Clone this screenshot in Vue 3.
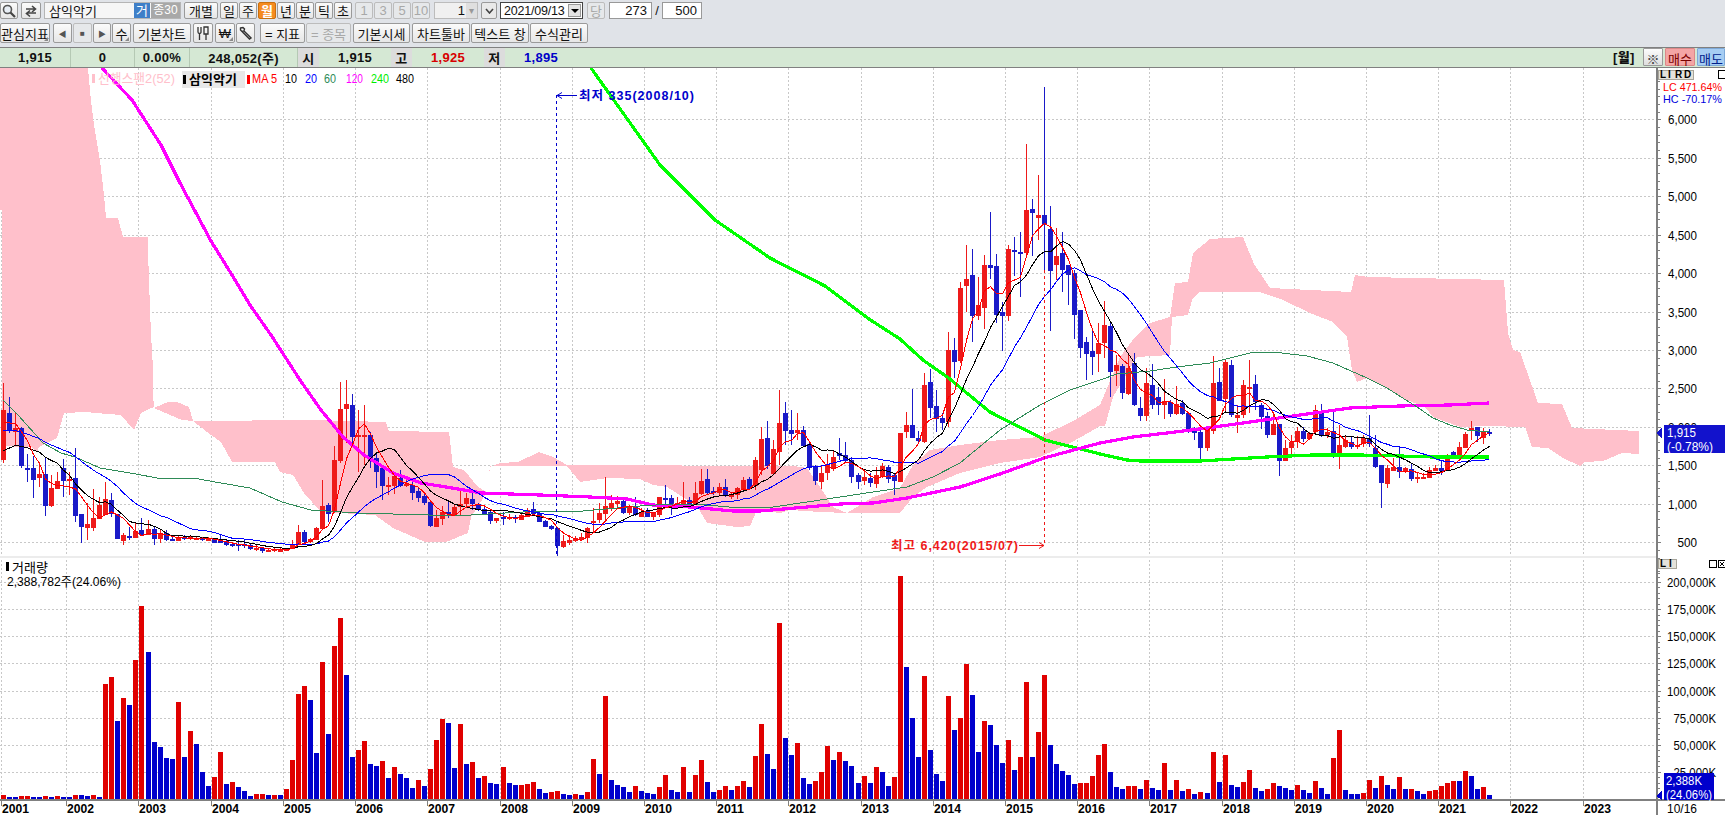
<script setup>
// 월봉 차트: 좌표는 화면 픽셀 기준 (y = 68 ~ 815)
const barX = (i) => Math.floor(3.6 + 6.017 * i)
const priceY = (p) => 119.3 + (6000 - p) * 0.0769
const volBase = 799
const volY = (k) => volBase - k * 0.001085

// "색 고가 몸통위 몸통아래 저가" 묶음. base/scale은 읽어낸 원본 좌표계
function parseRows(text, base, scale) {
  return text
    .trim()
    .split(',')
    .map((row) => {
      const [c, hi, top, bot, lo] = row.trim().split(/\s+/)
      const f = (v) => Math.round(base + Number(v) / scale)
      return { up: c === 'r', hi: f(hi), top: f(top), bot: f(bot), lo: f(lo) }
    })
}

const candles = [
  ...parseRows(
    `r 9 90 240 248,b 50 98 150 160,r 98 143 155 198,b 140 143 258 265,b 222 264 266 305,b 228 264 299 353,
    r 245 282 293 320,b 232 282 378 407,r 285 324 378 382,r 277 304 326 328,b 238 264 303 350,r 275 297 302 345,
    b 204 294 407 425,b 402 402 441 489,r 369 432 444 480,r 327 414 444 453,r 352 375 417 417,r 306 357 405 405,
    b 340 360 402 410,b 402 402 477 477,r 460 465 483 495,b 440 468 474 480,r 425 453 474 475,b 414 450 465 468,
    r 420 447 465 465,b 438 447 477 495,r 450 459 477 488,b 450 459 480 482,b 470 477 483 483,r 465 471 483 483,
    b 465 471 473 480,r 465 471 477 480,r 470 474 478 480,b 472 474 480 482,r 470 474 482 484,b 475 477 488 488,
    b 462 478 488 490,b 478 483 495 497,b 486 491 498 500,b 480 493 495 512,b 480 491 497 505,b 490 495 506 510,
    r 495 503 509 512,b 500 505 514 518,r 505 509 515 515,r 500 507 513 515,r 505 509 513 515,r 503 507 512 512,
    r 480 491 506 507,r 435 456 493 494,b 450 455 486 490,r 475 478 486 488,r 441 444 480 481,r 301 378 447 448,
    b 368 375 402 425,r 198 240 395 400,r 5 87 243 250,r 0 72 87 190,b 42 75 171 190,r 90 165 171 275,
    r 75 165 171 255,b 156 165 234 265,b 220 234 276 325,b 258 264 318 360,r 290 315 319 345,r 280 288 318 342,
    b 270 294 318 322,r 290 312 316 322,b 300 315 339 360,b 325 333 354 366,b 340 348 369 375,b 360 366 438 440,
    r 390 414 440 441,r 378 396 417 435,b 365 396 402 415,r 375 381 405 405,r 325 372 381 405,r 338 354 372 378,
    b 338 357 372 390,b 368 372 390 392,b 380 387 402 404,b 390 396 423 432,r 415 415 423 428,b 397 411 414 435,
    r 403 411 417 420,b 405 412 415 428,r 398 405 420 420,r 385 391 411 412,b 366 387 402 402,b 395 399 426 426,
    b 420 423 441 441,b 435 438 447 450,b 440 444 498 528`,
    380,
    3
  ),
  ...parseRows(
    `r 465 483 500 505,r 465 480 489 495,r 468 474 483 485,r 460 471 480 480,r 440 445 473 488,r 385 423 426 455,
    r 370 399 420 428,r 290 378 402 420,r 345 369 387 392,r 348 363 371 382,b 355 363 399 402,r 375 381 399 405,
    b 352 378 405 408,r 385 396 411 412,b 385 393 411 412,r 395 399 411 420,r 352 352 405 412,b 315 354 356 372,
    b 345 354 378 405,r 352 369 378 385,r 306 360 372 372,b 350 360 375 380,r 305 339 375 375,r 267 303 342 345,
    b 267 297 339 345,b 320 333 339 345,r 310 321 339 345,b 298 321 345 350,r 335 345 351 357,r 320 324 345 357,
    r 292 300 330 330,b 290 297 327 330,r 230 240 318 330,r 141 177 270 285,b 123 174 258 268,r 180 207 282 285,
    r 30 129 216 255,b 66 99 153 195,b 90 150 162 195,r 99 150 160 180,b 138 150 198 200,b 188 192 264 270,
    b 255 258 303 315,r 255 279 306 327,r 222 255 279 300,r 210 231 267 273,b 175 219 228 240,b 185 225 243 245,
    b 230 240 291 310,b 280 285 306 327,r 270 291 303 315,b 280 294 309 320,r 260 286 312 325,r 248 258 291 295,
    b 255 261 297 310,b 278 285 303 345,r 160 160 306 306,r 96 135 156 175,b 27 135 174 175,b 153 174 184 190,
    r -21 15 186 190,b -33 5 84 114,b 30 78 117 155,b 100 114 129 150,r -144 -90 126 140`,
    380,
    3
  ),
  ...parseRows(
    `b 338 350 362 378,r 282 288 361 363,r 245 279 286 312,b 249 275 316 342,r 277 305 316 320,r 255 265 308 329,
    b 212 265 268 279,b 254 266 315 323,b 302 312 316 351,r 245 249 316 321,b 237 250 252 276,b 232 252 254 297,
    r 144 210 253 255,b 199 209 213 256,r 175 215 218 240,b 87 215 225 270,b 206 229 271 331,r 228 256 265 280,
    b 232 253 270 292,b 265 265 275 305,b 270 273 315 339,b 310 310 348 358,b 337 342 354 380,b 330 351 357 375,
    r 323 343 354 372,r 301 325 343 358,b 323 326 372 397`,
    0,
    1
  ),
  ...parseRows(
    `r 165 195 213 258,b 192 198 279 297,r 160 204 282 285,b 160 189 315 318,b 290 324 348 362,r 204 249 348 362,
    b 192 255 315 327,b 261 291 315 345,r 237 303 315 357,b 300 305 342 352,r 258 311 342 345,b 300 309 342 345,
    b 335 339 396 399,b 380 393 396 420,b 380 396 444 477,r 385 390 444 452,r 168 249 393 402,b 204 246 303 303,
    r 180 186 297 340,b 180 195 345 350,r 315 345 354 399,r 240 255 345 354,r 180 261 267 340,b 225 252 306 330,
    b 310 315 351 387,b 335 348 405 415,r 335 372 405 405,b 372 372 483 528,r 420 444 483 483,r 405 427 444 470,
    r 380 393 427 444,b 382 393 417 425,r 395 399 417 420,r 315 330 396 400,b 312 339 405 412,r 384 396 405 415,
    b 336 394 459 473,r 375 435 461 506,r 405 420 441 445,b 408 426 441 447,r 408 435 441 447,r 405 414 432 440,
    b 345 414 432 440,b 405 444 501 504,b 495 495 549 623,r 495 504 552 564,r 475 501 513 513,b 441 501 516 535,
    r 500 504 516 520,b 490 507 537 543,r 520 531 537 549,r 520 531 534 537,r 500 510 534 534,r 495 504 513 513,
    b 480 504 513 525,r 462 471 513 513,b 452 456 471 475,r 425 441 471 475,r 395 402 444 445,r 363 384 390 420,
    b 380 381 408 425,r 385 396 414 431,b 387 396 402 407`,
    300,
    3
  ),
].map((c, i) => ({ ...c, x: barX(i) }))

// 거래량: 양수 = 빨강, 음수 = 파랑 (1/3 픽셀 단위)
const volumes = [
  12, -6, -6, 9, 9, -6, -6, 9, -6, 9, -6, -6, 12, -12, -9, 12, -6, 345, 366, -234, 303, -282, 417, 579, -441, -171,
  -156, -123, -120, 291, -126, 204, -165, -81, -39, 66, 141, -45, 51, -36, -24, -9, 15, 15, -12, 12, -12, 30, 117, 315,
  339, -297, -138, 411, -195, 459, 543, -372, -126, 147, 174, -105, -99, 114, -63, 96, -75, -63, -33, 57, -39, 90, 177,
  240, -228, -93, 225, -105, 111, -63, 69, -48, -45, 96, -48, -42, 42, 45, 51, -30, -18, 21, 24, -15, -12, 15, -12, 21,
  120, -75, 309, -57, -42, -36, -21, 39, -24, -18, -15, 36, 72, -27, -21, 96, -21, 72, 117, -51, -21, 27, 39, -27, 39,
  54, -36, 129, 225, -135, -90, 528, -183, -132, 168, -63, -45, 54, 81, 159, -117, 141, -114, -99, -48, 69, -48, 96,
  -81, -39, 66, 669, -396, -243, -126, 369, -147, -75, -54, 309, -207, 243, 405, -312, -141, 234, -222, -162, -108, 177,
  -87, 126, 351, -126, 201, 372, -162, -105, -84, -72, -45, 48, 48, 69, 132, 165, -81, -36, -30, 39, 39, -30, 57, -33,
  -27, 108, -27, 57, -24, 30, -15, 21, -18, 141, -51, 132, -42, -36, 51, 87, -33, -24, 30, 48, -39, -33, -27, 42, -27,
  -18, 54, -33, -15, 123, 207, -27, -15, -15, 18, 57, -33, 69, -42, -30, 66, -30, 30, -24, -15, 24, 27, 39, 48, 54, -54,
  84, -69, -30, 36, -12,
].map((v, i) => ({ x: barX(i), h: Math.round(Math.abs(v) / 3), up: v > 0 }))

// 이동평균 5/10/20 은 종가(픽셀)로 계산
const closes = candles.map((c) => (c.up ? c.top : c.bot))
function maPoints(n, seed) {
  return closes
    .map((_, i) => {
      let s = 0
      for (let j = i - n + 1; j <= i; j++) s += j < 0 ? seed : closes[j]
      return `${barX(i) + 0.5},${(s / n).toFixed(1)}`
    })
    .join(' ')
}
const ma5 = maPoints(5, 425)
const ma10 = maPoints(10, 455)
const ma20 = maPoints(20, 432)

const ma60 =
  '3,400 18,415 43,443 61,453 75,457 100,468 136,474 157,478 193,478 221,483 250,488 282,502 311,510 357,513 429,515 471,515 540,511 583,511 640,506 673,504 707,505 740,508 773,507 807,502 840,497 873,492 907,487 933,477 960,463 1000,430 1040,405 1070,390 1100,380 1117,374 1150,371 1177,367 1210,363 1250,353 1273,352 1307,356 1333,363 1367,378 1387,388 1417,407 1433,418 1450,425 1467,430 1489,432'
const ma120 =
  '102,68 132,100 161,145 180,183 211,241 232,275 250,305 271,335 300,380 321,410 343,437 364,455 393,473 421,483 446,487 482,493 511,494 540,495 590,497 627,499 653,505 690,507 733,511 760,511 807,507 840,504 873,503 907,498 960,487 1000,474 1044,458 1070,451 1100,443 1133,437 1167,433 1207,428 1250,422 1300,415 1350,408 1400,406 1450,405 1489,403'
const ma240 =
  '591,68 660,165 715,220 770,258 825,286 869,319 900,339 923,360 950,379 957,385 990,412 1045,440 1100,454 1127,460 1140,461 1200,461 1233,459 1267,457 1313,455 1360,455 1400,456 1433,457 1489,457'

// 일목 구름대
const cloud = [
  '0,68 88,68 91,101 94,125 100,161 104,195 106,218 118,218 123,237 147.5,237 149,281 151,335 153,368 153.6,407 141,413 134,430 121,415 96,413 86,412 64,413 57,438 39,447 37,453 32,447 18,447 2,445 2,210 0,210',
  '154,408 168,402 177,402 189,407 193,421 182,420',
  '193,421 314,420 386,422 389,431 449,432 453,467 464,470 478,487 487,492 471,517 468,533 446,542 425,542 393,528 375,515 321,512 304,493 293,475 280,472 275,462 232,462 221,442 211,435',
  '487,492 490,467 500,463 518,462 539,452 553,457 567,465 793,466 807,468 820,487 833,507 847,513 820,512 790,510 780,513 757,510 750,526 737,527 707,523 697,506 667,487 653,485 640,479 607,478 580,482 567,466 490,466',
  '847,513 873,497 900,488 913,465 930,450 960,445 1000,440 1040,437 1075,420 1100,405 1120,357 1135,337 1150,323 1170,317 1175,283 1188,282 1193,253 1210,239 1243,237 1254,264 1270,288 1351,292 1355,275 1368,277 1504,280 1508,333 1513,350 1520,352 1537,400 1538,403 1562,404 1572,428 1639,431 1639,454 1622,453 1603,461 1585,462 1580,466 1563,458 1548,448 1532,447 1525,427 1487,426 1460,427 1433,417 1425,407 1407,400 1390,390 1377,383 1367,378 1357,382 1352,370 1347,337 1333,322 1310,313 1283,300 1260,292 1199,292 1192,300 1188,315 1172,317 1170,355 1137,357 1133,363 1113,397 1105,426 1100,426 1090,432 1070,443 1040,457 1000,463 960,473 927,487 913,497 900,513',
]

// 축
const axisRight = 1657
const years = Array.from({ length: 23 }, (_, k) => ({
  label: 2001 + k,
  x: k === 0 ? 1 : barX(11 + (k - 1) * 12) - 3,
}))
const fmt = (n) => n.toLocaleString('en-US')
const textW = (s) => [...s].reduce((w, ch) => w + (ch === ',' ? 3 : ch === 'K' ? 7 : 6.5), 0)

const priceTicks = Array.from({ length: 12 }, (_, k) => (k + 1) * 500).map((p) => ({
  y: Math.round(priceY(p)),
  text: fmt(p),
}))
const priceMinor = Array.from({ length: 65 }, (_, k) => Math.round(priceY(100 + k * 100)))
const volTicks = Array.from({ length: 8 }, (_, k) => (k + 1) * 25000).map((v) => ({
  y: Math.round(volY(v)),
  text: fmt(v) + 'K',
}))
const volMinor = Array.from({ length: 44 }, (_, k) => Math.round(volY((k + 1) * 5000)))

const maLegend = [
  { t: 'MA 5', x: 252, w: 25, c: '#ff0000' },
  { t: '10', x: 285, w: 12, c: '#000000' },
  { t: '20', x: 305, w: 12, c: '#0000ff' },
  { t: '60', x: 324, w: 12, c: '#2e8b57' },
  { t: '120', x: 346, w: 17, c: '#ff00ff' },
  { t: '240', x: 371, w: 18, c: '#00ee00' },
  { t: '480', x: 396, w: 18, c: '#000000' },
]

const periods = ['일', '주', '월', '년', '분', '틱', '초']
const counts = ['1', '3', '5', '10']
</script>

<template>
  <div class="hts">
    <div class="toolbar row1">
      <button class="btn w18">
        <svg width="14" height="14" viewBox="0 0 14 14">
          <circle cx="5.5" cy="5.5" r="4" fill="#e8eef5" stroke="#555" stroke-width="1.6" />
          <path d="M8.5 8.5 L13 13" stroke="#444" stroke-width="2.2" />
        </svg>
      </button>
      <button class="btn w20 ml3">
        <svg width="14" height="14" viewBox="0 0 14 14" fill="none" stroke="#444" stroke-width="1.6">
          <path d="M2 5 H11 M8 2 L11.500 5 L8 8" />
          <path d="M12 9 H3 M6 6.500 L2.500 9.500 L6 12.500" />
        </svg>
      </button>
      <div class="code ml3">
        <span class="code-name">삼익악기</span>
        <span class="tag-blue">거</span>
        <span class="tag-grey">종30</span>
      </div>
      <button class="btn w34 ml3">개별</button>
      <div class="group ml2">
        <button v-for="p in periods" :key="p" class="btn w18" :class="{ on: p === '월' }">{{ p }}</button>
      </div>
      <div class="group ml3">
        <button v-for="c in counts" :key="c" class="btn w18 off">{{ c }}</button>
      </div>
      <div class="spin ml4">
        <span class="spin-val">1</span>
        <span class="spin-arrow">▾</span>
      </div>
      <button class="btn w16 ml3 chev">
        <svg width="9" height="6" viewBox="0 0 9 6" fill="none" stroke="#444" stroke-width="1.6"><path d="M1 1 L4.500 5 L8 1" /></svg>
      </button>
      <div class="date ml3">
        <span>2021/09/13</span>
        <span class="date-arrow"><i></i></span>
      </div>
      <button class="btn w18 off ml4">당</button>
      <div class="field w43 ml4">273</div>
      <span class="slash">/</span>
      <div class="field w40">500</div>
    </div>

    <div class="toolbar row2">
      <button class="btn w50 corner">관심지표</button>
      <div class="group ml3">
        <button class="btn w19 tri">◀</button>
        <button class="btn w19 tri off">■</button>
        <button class="btn w18 tri">▶</button>
      </div>
      <button class="btn w19 corner ml1">수</button>
      <button class="btn w58 ml2">기본차트</button>
      <button class="btn w20 ml2">
        <svg width="14" height="15" viewBox="0 0 14 15" fill="none" stroke="#333" stroke-width="1.3">
          <path d="M2 1 V6 C2 8 5 8 5 6 V1 M3.500 8 V14" />
          <path d="M8 1 H12 V8 H8 Z M10 8 V14" />
        </svg>
      </button>
      <button class="btn w20 corner ml2">₩</button>
      <button class="btn w19 ml1">
        <svg width="14" height="14" viewBox="0 0 14 14" fill="none" stroke="#333" stroke-width="1.4">
          <path d="M1.500 2 L4 1.500 L5.500 3 L5 5 L3 5.500 L1.500 4 Z M5 5 L12 12 L10.500 13 L3.500 6" />
        </svg>
      </button>
      <button class="btn w45 ml5">= 지표</button>
      <button class="btn w45 off ml1">= 종목</button>
      <button class="btn w57 ml2">기본시세</button>
      <button class="btn w58 ml2">차트툴바</button>
      <button class="btn w58 ml1">텍스트 창</button>
      <button class="btn w58 ml1">수식관리</button>
    </div>

    <div class="info">
      <span class="cell c71">1,915</span>
      <span class="cell c64">0</span>
      <span class="cell c55">0.00%</span>
      <span class="cell c108">248,052(주)</span>
      <span class="key">시</span>
      <span class="cell c72 plain">1,915</span>
      <span class="key">고</span>
      <span class="cell c72 plain up">1,925</span>
      <span class="key">저</span>
      <span class="cell c72 plain down">1,895</span>
      <span class="info-fill"></span>
      <b class="period-tag">[월]</b>
      <button class="gear">※</button>
      <button class="buy">매수</button>
      <button class="sell">매도</button>
    </div>

    <svg class="chart" width="1725" height="747" viewBox="0 68 1725 747" shape-rendering="crispEdges">
      <!-- 격자 -->
      <g class="grid">
        <line v-for="t in priceTicks" :key="'gp' + t.y" x1="0" :x2="axisRight" :y1="t.y + 0.5" :y2="t.y + 0.5" />
        <line v-for="t in volTicks" :key="'gv' + t.y" x1="0" :x2="axisRight" :y1="t.y + 0.5" :y2="t.y + 0.5" />
        <line v-for="t in years" :key="'gx' + t.label" :x1="t.x + 0.5" :x2="t.x + 0.5" y1="68" y2="800" />
      </g>
      <rect x="0" y="556" :width="axisRight" height="2" fill="#ececec" />

      <polygon v-for="(p, i) in cloud" :key="'c' + i" :points="p" class="cloud" />

      <!-- 캔들 -->
      <g v-for="(c, i) in candles" :key="'k' + i" :fill="c.up ? '#ee1a1a' : '#1a1ac8'">
        <rect :x="c.x" :y="c.hi" width="1" :height="Math.max(c.lo - c.hi, 1)" />
        <rect :x="c.x - 2" :y="c.top" width="5" :height="Math.max(c.bot - c.top, 2)" />
      </g>

      <!-- 이동평균 -->
      <g fill="none">
        <polyline :points="ma240" stroke="#00ff00" stroke-width="3.2" />
        <polyline :points="ma120" stroke="#ff00ff" stroke-width="3.2" />
        <polyline :points="ma60" stroke="#2e8b57" stroke-width="1" />
        <polyline :points="ma20" stroke="#0000ff" stroke-width="1" />
        <polyline :points="ma10" stroke="#000000" stroke-width="1" />
        <polyline :points="ma5" stroke="#ff0000" stroke-width="1" />
      </g>

      <!-- 최저 / 최고 -->
      <line x1="556.500" x2="556.500" y1="95" y2="556" stroke="#0000cc" stroke-dasharray="3 3" />
      <line x1="557" x2="577" y1="95.500" y2="95.500" stroke="#0000cc" />
      <path d="M557 95.500 L562 92.500 M557 95.500 L562 98.500" stroke="#0000cc" fill="none" shape-rendering="auto" />
      <text x="579" y="99.500" class="mark" fill="#0000cc" textLength="115" lengthAdjust="spacing">최저 335(2008/10)</text>

      <line x1="1044.500" x2="1044.500" y1="270" y2="545" stroke="#ee1a1a" stroke-dasharray="3 3" />
      <line x1="1019" x2="1044" y1="545.500" y2="545.500" stroke="#ee1a1a" />
      <path d="M1044 545.500 L1039 542.500 M1044 545.500 L1039 548.500" stroke="#ee1a1a" fill="none" shape-rendering="auto" />
      <text x="891" y="550" class="mark" fill="#ee1a1a" textLength="127" lengthAdjust="spacing">최고 6,420(2015/07)</text>

      <!-- 범례 -->
      <rect x="92" y="74" width="3" height="9" fill="#ffc0cb" />
      <text x="98" y="83" class="lg" fill="#ffc0cb" textLength="77" lengthAdjust="spacingAndGlyphs">선행스팬2(52)</text>
      <rect x="182" y="71" width="63" height="17" fill="#e8e8e8" />
      <rect x="183" y="75" width="3" height="9" fill="#000" />
      <text x="189" y="84" class="lg bold" fill="#000">삼익악기</text>
      <rect x="247" y="75" width="3" height="9" fill="#ff0000" />
      <text
        v-for="m in maLegend"
        :key="m.t"
        :x="m.x"
        y="83"
        class="lg"
        :fill="m.c"
        :textLength="m.w"
        lengthAdjust="spacingAndGlyphs"
      >{{ m.t }}</text>

      <rect x="6" y="562" width="3" height="9" fill="#000" />
      <text x="12" y="572" class="lg" fill="#000">거래량</text>
      <text x="7" y="586" class="lg" fill="#000" textLength="114" lengthAdjust="spacingAndGlyphs">2,388,782주(24.06%)</text>

      <!-- 거래량 -->
      <rect
        v-for="(v, i) in volumes"
        :key="'v' + i"
        :x="v.x - 2"
        :y="volBase - v.h"
        width="5"
        :height="v.h"
        :fill="v.up ? '#e00000' : '#0000cc'"
      />

      <!-- 오른쪽 축 -->
      <rect :x="axisRight - 1" y="68" width="2" height="747" fill="#808080" />
      <rect x="0" y="799" width="1725" height="2" fill="#808080" />
      <g fill="#808080">
        <rect v-for="y in priceMinor" :key="'m' + y" :x="axisRight" :y="y" width="3" height="1" />
        <rect v-for="y in volMinor" :key="'n' + y" :x="axisRight" :y="y" width="3" height="1" />
        <rect v-for="t in priceTicks" :key="'t' + t.y" :x="axisRight" :y="t.y" width="4" height="1" />
        <rect v-for="t in volTicks" :key="'u' + t.y" :x="axisRight" :y="t.y" width="4" height="1" />
        <rect v-for="t in years" :key="'w' + t.label" :x="t.x" y="800" width="1" height="6" />
      </g>
      <g class="axis">
        <text
          v-for="t in priceTicks"
          :key="'pl' + t.y"
          x="1697"
          :y="t.y + 5"
          text-anchor="end"
          :textLength="textW(t.text)"
          lengthAdjust="spacingAndGlyphs"
        >{{ t.text }}</text>
        <text
          v-for="t in volTicks"
          :key="'vl' + t.y"
          x="1716"
          :y="t.y + 5"
          text-anchor="end"
          :textLength="textW(t.text)"
          lengthAdjust="spacingAndGlyphs"
        >{{ t.text }}</text>
        <text x="1667" y="813" textLength="30" lengthAdjust="spacingAndGlyphs">10/16</text>
      </g>
      <text
        v-for="t in years"
        :key="'yl' + t.label"
        :x="t.x + 1"
        y="813"
        class="year"
        textLength="27"
        lengthAdjust="spacingAndGlyphs"
      >{{ t.label }}</text>

      <!-- L I R D -->
      <g class="mini">
        <rect x="1658" y="70" width="35" height="9" fill="#e4e2da" stroke="#a8a59a" />
        <text x="1660" y="78">L</text>
        <text x="1668" y="78">I</text>
        <text x="1675" y="78">R</text>
        <text x="1684" y="78">D</text>
        <rect x="1658" y="559" width="18" height="9" fill="#e4e2da" stroke="#a8a59a" />
        <text x="1660" y="567">L</text>
        <text x="1669" y="567">I</text>
      </g>
      <g fill="none" stroke="#000">
        <rect x="1718.500" y="70.500" width="7" height="8" stroke-width="1.500" />
        <rect x="1709.500" y="560.500" width="7" height="7" stroke-width="1.500" />
        <rect x="1718.500" y="560.500" width="7" height="7" />
        <path d="M1720 562 L1724 566 M1724 562 L1720 566" />
      </g>
      <text x="1663" y="91" class="side" fill="#ff0000" textLength="59" lengthAdjust="spacingAndGlyphs">LC 471.64%</text>
      <text x="1663" y="103" class="side" fill="#0000dd" textLength="59" lengthAdjust="spacingAndGlyphs">HC -70.17%</text>

      <!-- 현재가 / 현재 거래량 -->
      <rect x="1664" y="425" width="61" height="28" fill="#1212cc" />
      <path d="M1656 433 L1662 428 V438 Z" fill="#1212cc" />
      <text x="1667" y="437" class="flag" textLength="29" lengthAdjust="spacingAndGlyphs">1,915</text>
      <text x="1667" y="451" class="flag" textLength="46" lengthAdjust="spacingAndGlyphs">(-0.78%)</text>
      <rect x="1664" y="773" width="50" height="27" fill="#0000cc" />
      <path d="M1656 796 L1662 791 V800 Z" fill="#0000cc" />
      <text x="1666" y="785" class="flag" textLength="36" lengthAdjust="spacingAndGlyphs">2,388K</text>
      <text x="1666" y="799" class="flag" textLength="46" lengthAdjust="spacingAndGlyphs">(24.06%)</text>
    </svg>
  </div>
</template>

<style>
html,
body {
  margin: 0;
  overflow: hidden;
  background: #fff;
}
</style>

<style scoped>
.hts {
  width: 1725px;
  height: 815px;
  overflow: hidden;
  display: flex;
  flex-direction: column;
  background: #fff;
  font-family: 'Liberation Sans', 'Noto Sans CJK KR', sans-serif;
  color: #111;
}
.toolbar {
  display: flex;
  align-items: stretch;
  background: #e0e3e8;
  flex: none;
}
.row1 {
  height: 17px;
  padding: 2px 0 4px;
}
.row2 {
  height: 20px;
  padding-bottom: 4px;
  border-bottom: 1px solid #808080;
}
.btn {
  position: relative;
  display: flex;
  align-items: center;
  justify-content: center;
  box-sizing: border-box;
  padding: 0;
  font: 13px 'Liberation Sans', 'Noto Sans CJK KR', sans-serif;
  color: #111;
  background: linear-gradient(#fbfbfb, #e6e6e6);
  border: 1px solid #9a9a9a;
  border-radius: 2px;
  white-space: nowrap;
}
.btn.on {
  background: #f58b1f;
  border-color: #c87010;
  color: #fff;
  font-weight: 700;
}
.btn.off {
  color: #a8a8a8;
  background: #e6e8ea;
  border-color: #bcbcbc;
}
.btn.tri {
  font-size: 8px;
  color: #555;
}
.corner::after {
  content: '';
  position: absolute;
  right: 1px;
  bottom: 1px;
  border-left: 4px solid transparent;
  border-bottom: 4px solid #8a8a8a;
}
.group {
  display: flex;
  gap: 1px;
}
.w16 { width: 16px; }
.w18 { width: 18px; }
.w19 { width: 19px; }
.w20 { width: 20px; }
.w34 { width: 34px; }
.w45 { width: 45px; }
.w50 { width: 50px; }
.w57 { width: 57px; }
.w58 { width: 58px; }
.ml1 { margin-left: 1px; }
.ml2 { margin-left: 2px; }
.ml3 { margin-left: 3px; }
.ml4 { margin-left: 4px; }
.ml5 { margin-left: 5px; }
.code {
  width: 137px;
  box-sizing: border-box;
  display: flex;
  align-items: center;
  background: #f6f6f6;
  border: 1px solid #b5b5b5;
  font-size: 13px;
}
.code-name {
  flex: 1;
  padding-left: 4px;
}
.tag-blue {
  width: 16px;
  height: 100%;
  background: #3f7fc8;
  color: #fff;
  text-align: center;
  line-height: 15px;
}
.tag-grey {
  width: 29px;
  height: 100%;
  margin-left: 1px;
  background: #a8a8a8;
  color: #fff;
  text-align: center;
  font-size: 12px;
  line-height: 15px;
}
.spin {
  width: 44px;
  box-sizing: border-box;
  display: flex;
  align-items: stretch;
  border: 1px solid #bcbcbc;
  background: #f0f0f0;
  font-size: 13px;
}
.spin-val {
  flex: 1;
  text-align: right;
  padding-right: 1px;
  line-height: 15px;
}
.spin-arrow {
  width: 11px;
  text-align: center;
  font-size: 10px;
  line-height: 15px;
  color: #999;
  background: #dfdfdf;
}
.chev {
  background: #e9e9e9;
}
.date {
  width: 83px;
  box-sizing: border-box;
  display: flex;
  align-items: center;
  justify-content: space-between;
  padding: 0 1px 0 3px;
  border: 1px solid #444;
  background: #fff;
  font-size: 12.500px;
  letter-spacing: -0.2px;
}
.date-arrow {
  width: 13px;
  height: 13px;
  display: flex;
  align-items: center;
  justify-content: center;
  background: #e4e4e4;
  border: 1px solid #999;
  box-sizing: border-box;
}
.date-arrow i {
  border-left: 4px solid transparent;
  border-right: 4px solid transparent;
  border-top: 4px solid #000;
}
.field {
  box-sizing: border-box;
  border: 1px solid #999;
  background: #fff;
  font-size: 13px;
  text-align: right;
  padding-right: 4px;
  line-height: 15px;
}
.w43 { width: 43px; }
.w40 { width: 40px; }
.slash {
  width: 10px;
  text-align: center;
  font-size: 13px;
  line-height: 17px;
}
.info {
  flex: none;
  height: 19px;
  display: flex;
  align-items: stretch;
  background: #d5e8d4;
  border-bottom: 1px solid #808080;
  font-size: 13px;
  font-weight: 700;
  letter-spacing: 0.3px;
}
.cell {
  display: flex;
  align-items: center;
  justify-content: center;
  box-sizing: border-box;
  border-right: 1px solid #b5c9b4;
}
.cell.plain {
  border-right: none;
}
.c71 { width: 71px; }
.c64 { width: 64px; }
.c55 { width: 55px; }
.c108 { width: 108px; }
.c72 { width: 72px; }
.key {
  width: 21px;
  display: flex;
  align-items: center;
  justify-content: center;
  background: #dcdcdc;
  font-size: 13px;
}
.up { color: #d80000; }
.down { color: #0000c8; }
.info-fill {
  flex: 1;
}
.period-tag {
  width: 30px;
  font-size: 13px;
  line-height: 19px;
  white-space: nowrap;
}
.gear,
.buy,
.sell {
  box-sizing: border-box;
  height: 18px;
  padding: 0;
  font: 13px 'Liberation Sans', 'Noto Sans CJK KR', sans-serif;
  border-radius: 1px;
}
.gear {
  width: 20px;
  color: #444;
  background: linear-gradient(#fcfcfc, #dedede);
  border: 1px solid #999;
}
.buy {
  width: 30px;
  margin-left: 2px;
  color: #7a0000;
  background: #f4a5a5;
  border: 1px solid #d88;
}
.sell {
  width: 28px;
  margin-left: 2px;
  color: #00208a;
  background: #a6cdf3;
  border: 1px solid #7ea9d8;
}
.chart {
  display: block;
  flex: none;
}
.grid line {
  stroke: #c8c8c8;
  stroke-width: 1;
  stroke-dasharray: 2 2;
}
.cloud {
  fill: #ffc0cb;
}
text {
  font-family: 'Liberation Sans', 'Noto Sans CJK KR', sans-serif;
  shape-rendering: auto;
}
.lg {
  font-size: 13px;
}
.lg.bold {
  font-weight: 700;
}
.mark {
  font-size: 12.500px;
  font-weight: 700;
}
.axis text {
  font-size: 13px;
  fill: #000;
}
.year {
  font-size: 13px;
  font-weight: 700;
  fill: #000;
}
.mini text {
  font-size: 10px;
  font-weight: 700;
  fill: #000;
}
.side {
  font-size: 11.500px;
}
.flag {
  font-size: 13px;
  fill: #fff;
}
</style>
